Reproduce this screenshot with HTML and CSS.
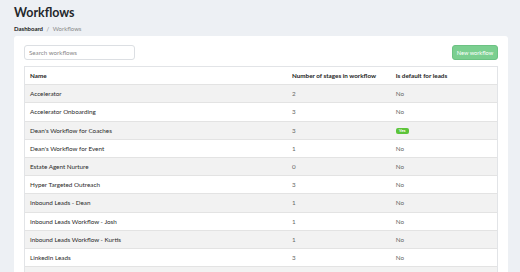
FILE: index.html
```html
<!doctype html>
<html lang="en">
  <head>
    <meta charset="UTF-8" />
    <meta name="viewport" content="width=device-width, initial-scale=1.0" />
    <title>Workflows</title>
    <link rel="stylesheet" href="styles.css">
  </head>
  <body>
    <div class="page">
      <h1 class="page-title">Workflows</h1>
      <div class="breadcrumb">
        <a href="#" class="crumb-link">Dashboard</a>
        <span class="crumb-sep">/</span>
        <span class="crumb-current">Workflows</span>
      </div>

      <div class="card">
        <div class="toolbar">
          <input class="search" type="text" placeholder="Search workflows" />
          <button class="btn-new">New workflow</button>
        </div>

        <div class="table-wrap">
          <table class="workflows">
            <thead>
              <tr>
                <th class="col-name">Name</th>
                <th class="col-stages">Number of stages in workflow</th>
                <th class="col-default">Is default for leads</th>
              </tr>
            </thead>
            <tbody>
              <tr><td class="name">Accelerator</td><td>2</td><td>No</td></tr>
              <tr><td class="name">Accelerator Onboarding</td><td>3</td><td>No</td></tr>
              <tr><td class="name">Dean's Workflow for Coaches</td><td>3</td><td><span class="badge-yes">Yes</span></td></tr>
              <tr><td class="name">Dean's Workflow for Event</td><td>1</td><td>No</td></tr>
              <tr><td class="name">Estate Agent Nurture</td><td>0</td><td>No</td></tr>
              <tr><td class="name">Hyper Targeted Outreach</td><td>3</td><td>No</td></tr>
              <tr><td class="name">Inbound Leads - Dean</td><td>1</td><td>No</td></tr>
              <tr><td class="name">Inbound Leads Workflow - Josh</td><td>1</td><td>No</td></tr>
              <tr><td class="name">Inbound Leads Workflow - Kurtis</td><td>1</td><td>No</td></tr>
              <tr><td class="name">LinkedIn Leads</td><td>3</td><td>No</td></tr>
              <tr><td class="name">Marketing Workflow</td><td>1</td><td>No</td></tr>
            </tbody>
          </table>
        </div>
      </div>
    </div>
  </body>
</html>
```

FILE: styles.css
```css
body {
  font-family: Lato, "Open Sans", Arial, sans-serif;
  margin: 0;
  background: #edf0f4;
  color: #222;
}

.page {
  padding: 5px 12px 0 14px;
}

.page-title {
  margin: 0;
  font-size: 12.4px;
  line-height: 16px;
  font-weight: 700;
  color: #23272b;
}

.breadcrumb {
  margin-top: 3px;
  font-size: 6px;
  line-height: 9px;
  color: #8a8a8a;
}

.crumb-link {
  color: #222;
  font-weight: 700;
  text-decoration: none;
}

.crumb-sep {
  margin: 0 2px;
}

/* Card */
.card {
  margin-top: 3px;
  background: #fff;
  border-radius: 3px;
  padding: 9px 10px 10px;
  min-height: 300px;
}

.toolbar {
  display: flex;
  justify-content: space-between;
  align-items: center;
  margin-bottom: 6px;
}

.search {
  width: 111px;
  height: 15px;
  box-sizing: border-box;
  border: 1px solid #dcdfe3;
  border-radius: 3px;
  padding: 0 4px;
  font-family: inherit;
  font-size: 6.2px;
  color: #333;
  outline: none;
}

.search::placeholder {
  color: #888;
}

.btn-new {
  width: 46px;
  height: 15px;
  box-sizing: border-box;
  padding: 0;
  border: 1px solid #6cc283;
  border-radius: 3px;
  background: #7bcf90;
  color: #fff;
  font-family: inherit;
  font-size: 5.7px;
}

/* Table */
.table-wrap {
  border: 1px solid #e2e4e7;
}

.workflows {
  width: 100%;
  border-collapse: collapse;
  font-size: 6.3px;
}

.workflows th,
.workflows td {
  height: 17.2px;
  padding: 0 5px;
  text-align: left;
  vertical-align: middle;
  border-top: 1px solid #e3e3e3;
}

.workflows th {
  border-top: none;
  font-weight: 700;
  color: #222;
}

.workflows td {
  color: #666;
}

.workflows td.name {
  color: #2a2a2a;
}

.workflows tbody tr:nth-child(odd) {
  background: #f2f2f2;
}

.col-name {
  width: 55.5%;
}

.col-stages {
  width: 22%;
}

.badge-yes {
  display: inline-block;
  background: #5cc43a;
  color: #fff;
  font-size: 4.5px;
  font-weight: 700;
  line-height: 6px;
  padding: 0 3px;
  border-radius: 2px;
}
```
